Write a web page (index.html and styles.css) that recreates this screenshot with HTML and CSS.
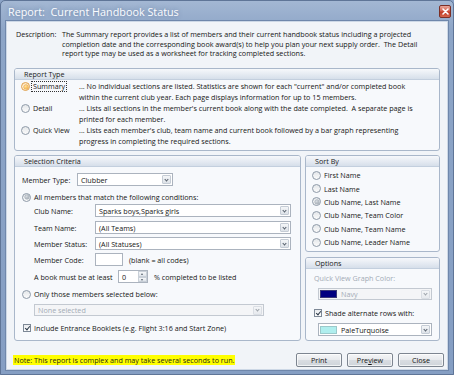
FILE: index.html
```html
<!DOCTYPE html>
<html lang="en">
<head>
  <meta charset="UTF-8">
  <title>Report: Current Handbook Status</title>
  <link rel="stylesheet" href="styles.css">
</head>
<body>
<div class="window">
  <div class="titlebar">
    <span class="title">Report:&nbsp; Current Handbook Status</span>
    <span class="close-btn" aria-label="Close">
      <svg width="7" height="7" viewBox="0 0 7 7"><path d="M1 1L6 6M6 1L1 6" stroke="#fff" stroke-width="1.6" stroke-linecap="round"/></svg>
    </span>
  </div>

  <div class="client">
    <div class="description">
      <span class="desc-label">Description:</span>
      <p class="desc-text">The Summary report provides a list of members and their current handbook status including a projected<br>completion date and the corresponding book award(s) to help you plan your next supply order.&nbsp; The Detail<br>report type may be used as a worksheet for tracking completed sections.</p>
    </div>

    <div class="group report-type">
      <div class="group-header">Report Type</div>
      <div class="report-rows">
        <div class="report-row">
          <label class="option"><span class="radio hot checked"></span><span class="focus-label">Summary</span></label>
          <p class="report-desc">... No individual sections are listed. Statistics are shown for each "current" and/or completed book<br>within the current club year. Each page displays information for up to 15 members.</p>
        </div>
        <div class="report-row">
          <label class="option"><span class="radio"></span>Detail</label>
          <p class="report-desc">... Lists all sections in the member's current book along with the date completed.&nbsp; A separate page is<br>printed for each member.</p>
        </div>
        <div class="report-row">
          <label class="option"><span class="radio"></span>Quick View</label>
          <p class="report-desc">... Lists each member's club, team name and current book followed by a bar graph representing<br>progress in completing the required sections.</p>
        </div>
      </div>
    </div>

    <div class="lower">
      <div class="group criteria">
        <div class="group-header">Selection Criteria</div>
        <div class="criteria-body">
          <div class="row row-type">
            <span class="type-label">Member Type:</span>
            <div class="combo type-combo"><span class="combo-text">Clubber</span><span class="combo-arrow"></span></div>
          </div>
          <label class="row row-radio mt-5"><span class="radio checked"></span>All members that match the following conditions:</label>
          <div class="row field-row mt-1">
            <span class="field-label">Club Name:</span>
            <div class="combo wide-combo"><span class="combo-text">Sparks boys,Sparks girls</span><span class="combo-arrow"></span></div>
          </div>
          <div class="row field-row mt-4">
            <span class="field-label">Team Name:</span>
            <div class="combo wide-combo"><span class="combo-text">(All Teams)</span><span class="combo-arrow"></span></div>
          </div>
          <div class="row field-row mt-3">
            <span class="field-label">Member Status:</span>
            <div class="combo wide-combo"><span class="combo-text">(All Statuses)</span><span class="combo-arrow"></span></div>
          </div>
          <div class="row field-row mt-3">
            <span class="field-label">Member Code:</span>
            <span class="textbox code-box"></span>
            <span class="hint">(blank = all codes)</span>
          </div>
          <div class="row field-row mt-4">
            <span class="book-label">A book must be at least</span>
            <div class="spinner"><span class="spin-value">0</span><span class="spin-arrows"><span class="spin-up"></span><span class="spin-down"></span></span></div>
            <span class="hint">% completed to be listed</span>
          </div>
          <label class="row row-radio mt-5"><span class="radio"></span>Only those members selected below:</label>
          <div class="row mt-4">
            <div class="combo disabled none-combo"><span class="combo-text">None selected</span><span class="combo-arrow"></span></div>
          </div>
          <label class="row row-check mt-6"><span class="checkbox checked"></span>Include Entrance Booklets (e.g. Flight 3:16 and Start Zone)</label>
        </div>
      </div>

      <div class="side">
        <div class="group sort-by">
          <div class="group-header">Sort By</div>
          <div class="sort-list">
            <label class="sort-item"><span class="radio"></span>First Name</label>
            <label class="sort-item"><span class="radio"></span>Last Name</label>
            <label class="sort-item"><span class="radio checked"></span>Club Name, Last Name</label>
            <label class="sort-item"><span class="radio"></span>Club Name, Team Color</label>
            <label class="sort-item"><span class="radio"></span>Club Name, Team Name</label>
            <label class="sort-item"><span class="radio"></span>Club Name, Leader Name</label>
          </div>
        </div>

        <div class="group options">
          <div class="group-header">Options</div>
          <div class="options-body">
            <span class="muted">Quick View Graph Color:</span>
            <div class="combo disabled color-combo"><span class="swatch navy"></span><span class="combo-text">Navy</span><span class="combo-arrow"></span></div>
            <label class="row-check shade-check"><span class="checkbox checked"></span>Shade alternate rows with:</label>
            <div class="combo color-combo shade-combo"><span class="swatch turquoise"></span><span class="combo-text">PaleTurquoise</span><span class="combo-arrow"></span></div>
          </div>
        </div>
      </div>
    </div>

    <div class="footer">
      <span class="note">Note: This report is complex and may take several seconds to run.</span>
      <div class="buttons">
        <button class="btn">Print</button>
        <button class="btn">Pre<u>v</u>iew</button>
        <button class="btn">Close</button>
      </div>
    </div>
  </div>
</div>
</body>
</html>
```

FILE: styles.css
```css
:root {
  --text: #161616;
  --muted: #a3abb6;
  --frame: #8ba3c6;
  --group-border: #a9b7ca;
  --field-border: #abb3be;
}

* {
  margin: 0;
  padding: 0;
  box-sizing: border-box;
}

body {
  width: 454px;
  height: 375px;
  overflow: hidden;
  font-family: 'Open Sans', 'Noto Sans', sans-serif;
  font-size: 7.2px;
  color: var(--text);
  background: var(--frame);
}

.window {
  width: 454px;
  height: 375px;
  display: flex;
  flex-direction: column;
  background: linear-gradient(180deg, #a3b7d3 0%, #8da5c7 8%, #859ec3 100%);
  border: 1px solid #5f7597;
  border-radius: 5px 5px 0 0;
}

.titlebar {
  height: 20px;
  flex: none;
  display: flex;
  align-items: center;
  justify-content: space-between;
  padding: 0 2px 0 7px;
}

.title {
  font-size: 10.8px;
  color: #fbfcfe;
  text-shadow: 0 0 4px rgba(70, 95, 135, 0.6);
}

.close-btn {
  width: 12px;
  height: 13px;
  display: flex;
  align-items: center;
  justify-content: center;
  border: 1px solid #7b2f26;
  border-radius: 2px;
  background: linear-gradient(180deg, #e9a79b 0%, #d4624f 45%, #c03a25 55%, #d5654c 100%);
  margin-top: 1px;
}

.client {
  flex: 1;
  margin: 0 5px 4px 5px;
  background: #f1f4f8;
  border: 1px solid #cdd8e6;
  outline: 1px solid #6f87ab;
  padding: 8px 7px 0 7px;
  display: flex;
  flex-direction: column;
}

/* description */
.description {
  display: flex;
  padding-left: 2px;
  line-height: 9.5px;
  height: 29px;
}

.desc-label {
  width: 46px;
  flex: none;
}

.desc-text {
  white-space: nowrap;
}

/* group boxes */
.group {
  border: 1px solid var(--group-border);
  border-radius: 3px;
  background: #f7f9fc;
  overflow: hidden;
}

.group-header {
  height: 11px;
  line-height: 10px;
  padding-left: 9px;
  background: linear-gradient(180deg, #f6f8fb 0%, #e3e9f1 60%, #d6dfea 100%);
  border-bottom: 1px solid #c3cfde;
  color: #222;
}

.report-type {
  margin-top: 9px;
  height: 83px;
}

.report-rows {
  display: flex;
  flex-direction: column;
  gap: 1px;
  padding: 1px 0 0 6px;
}

.report-row {
  display: flex;
  line-height: 10.5px;
}

.option {
  width: 58px;
  flex: none;
  display: flex;
  align-items: flex-start;
  gap: 3px;
  height: 10.5px;
}

.option .radio {
  margin-top: 1px;
}

.focus-label {
  outline: 1px dotted #333;
  outline-offset: 0;
  padding: 0 1px;
  margin-left: -1px;
  line-height: 9px;
  margin-top: 1px;
}

.report-desc {
  white-space: nowrap;
}

/* radios and checks */
.radio {
  width: 9px;
  height: 9px;
  flex: none;
  border-radius: 50%;
  border: 1px solid #8e9aa8;
  background: linear-gradient(180deg, #e4e7ea 0%, #fbfbfb 100%);
  position: relative;
}

.radio.checked::after {
  content: '';
  position: absolute;
  left: 1.5px;
  top: 1.5px;
  width: 4px;
  height: 4px;
  border-radius: 50%;
  background: radial-gradient(circle at 40% 35%, #d8dde2, #8c96a1);
  box-shadow: 0 0 0 0.5px #9aa4ae;
}

.radio.hot {
  border-color: #e0a04a;
  background: linear-gradient(180deg, #fde7c4 0%, #fff4e2 100%);
}

.radio.hot.checked::after {
  background: radial-gradient(circle at 40% 35%, #ffe29a, #f0a22a);
  box-shadow: 0 0 0 0.5px #e29a3a;
}

.checkbox {
  width: 8px;
  height: 8px;
  flex: none;
  border: 1px solid #7d8896;
  background: linear-gradient(180deg, #e9ebee 0%, #ffffff 100%);
  position: relative;
}

.checkbox.checked::after {
  content: '';
  position: absolute;
  left: 1.5px;
  top: 0;
  width: 2px;
  height: 4px;
  border: solid #2d3a4a;
  border-width: 0 1.2px 1.2px 0;
  transform: rotate(40deg);
}

/* lower area */
.lower {
  display: flex;
  gap: 4px;
  margin-top: 4px;
}

.criteria {
  width: 287px;
  height: 186px;
  flex: none;
}

.criteria-body {
  display: flex;
  flex-direction: column;
  padding: 6px 0 0 7px;
}

.row {
  display: flex;
  align-items: center;
}

.mt-1 { margin-top: 1px; }
.mt-3 { margin-top: 3px; }
.mt-4 { margin-top: 4px; }
.mt-5 { margin-top: 5px; }
.mt-6 { margin-top: 6px; }

.row-type {
  height: 13px;
}

.type-label {
  width: 55px;
  flex: none;
}

.row-radio {
  height: 12px;
  gap: 3px;
}

.field-row {
  height: 13px;
  padding-left: 12px;
}

.field-label {
  width: 61px;
  flex: none;
}

.combo {
  height: 13px;
  flex: none;
  display: flex;
  align-items: center;
  border: 1px solid var(--field-border);
  background: #fff;
  padding-left: 3px;
}

.combo-text {
  flex: 1;
  white-space: nowrap;
}

.combo-arrow {
  width: 9px;
  height: 9px;
  margin-right: 1px;
  border: 1px solid #c5ccd5;
  border-radius: 1px;
  background: linear-gradient(180deg, #f4f6f8, #dde2e8);
  position: relative;
  flex: none;
}

.combo-arrow::after {
  content: '';
  position: absolute;
  left: 2px;
  top: 1.5px;
  width: 2px;
  height: 2px;
  border: solid #56606c;
  border-width: 0 1px 1px 0;
  transform: rotate(45deg);
}

.type-combo {
  width: 96px;
}

.wide-combo {
  width: 196px;
}

.textbox {
  height: 13px;
  flex: none;
  border: 1px solid var(--field-border);
  background: #fff;
}

.code-box {
  width: 28px;
}

.hint {
  margin-left: 6px;
  white-space: nowrap;
}

.book-label {
  width: 84px;
  flex: none;
  white-space: nowrap;
}

.spinner {
  width: 30px;
  height: 13px;
  flex: none;
  border: 1px solid var(--field-border);
  background: #fff;
  display: flex;
  align-items: center;
  padding-left: 3px;
}

.spin-value {
  flex: 1;
}

.spin-arrows {
  width: 9px;
  height: 11px;
  display: flex;
  flex-direction: column;
}

.spin-up,
.spin-down {
  flex: 1;
  background: linear-gradient(180deg, #f5f7f9, #dfe4ea);
  border: 1px solid #c9d0d8;
  position: relative;
}

.spin-up::after,
.spin-down::after {
  content: '';
  position: absolute;
  left: 2px;
  width: 0;
  height: 0;
  border-left: 1.5px solid transparent;
  border-right: 1.5px solid transparent;
}

.spin-up::after {
  top: 1px;
  border-bottom: 2px solid #56606c;
}

.spin-down::after {
  top: 1px;
  border-top: 2px solid #56606c;
}

.none-combo {
  width: 230px;
  height: 12px;
  margin-left: 12px;
}

.combo.disabled {
  background: #f4f5f7;
  border-color: #c3c9d1;
  color: var(--muted);
}

.combo.disabled .combo-arrow {
  opacity: 0.55;
}

.row-check {
  display: flex;
  align-items: center;
  height: 12px;
  gap: 3px;
  padding-left: 1px;
}

/* right column */
.side {
  width: 135px;
  display: flex;
  flex-direction: column;
  gap: 5px;
}

.sort-by {
  height: 97px;
}

.sort-list {
  display: flex;
  flex-direction: column;
  padding: 1.5px 0 0 6px;
}

.sort-item {
  height: 13.4px;
  display: flex;
  align-items: center;
  gap: 3px;
}

.options {
  height: 84px;
}

.options-body {
  display: flex;
  flex-direction: column;
  padding: 4px 0 0 8px;
}

.muted {
  color: var(--muted);
  line-height: 10px;
}

.color-combo {
  width: 114px;
  height: 12px;
  margin: 5px 0 0 4px;
  padding-left: 1px;
}

.swatch {
  width: 17px;
  height: 8px;
  margin-right: 4px;
  flex: none;
}

.swatch.navy {
  background: #000080;
  border: 1px solid #3a3a78;
}

.swatch.turquoise {
  background: #afeeee;
  border: 1px solid #9bc9cb;
}

.shade-check {
  margin-top: 7px;
  padding-left: 0;
}

.shade-combo {
  height: 13px;
  margin-top: 4px;
  color: var(--text);
}

/* footer */
.footer {
  display: flex;
  align-items: center;
  justify-content: space-between;
  margin-top: 12px;
  margin-right: -4px;
  margin-left: -1px;
}

.note {
  background: #ffff00;
  padding: 0 1px;
  line-height: 10px;
  color: #2a2a10;
}

.buttons {
  display: flex;
  gap: 5px;
}

.btn {
  width: 46px;
  height: 14px;
  font-family: inherit;
  font-size: 7.2px;
  color: var(--text);
  border: 1px solid #7d8590;
  border-radius: 2px;
  background: linear-gradient(180deg, #f4f5f7 0%, #e8eaed 48%, #d9dde2 52%, #cfd4da 100%);
  box-shadow: inset 0 0 0 1px rgba(255, 255, 255, 0.7);
}
```
